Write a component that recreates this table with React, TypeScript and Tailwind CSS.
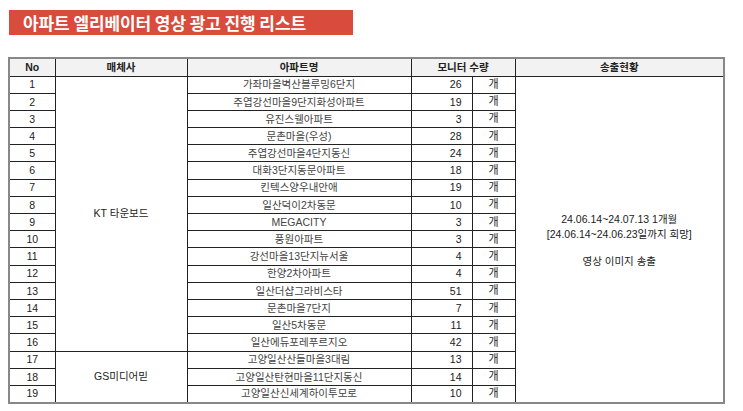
const rows: [string, number][] = [
  ['가좌마을벽산블루밍6단지', 26],
  ['주엽강선마을9단지화성아파트', 19],
  ['유진스웰아파트', 3],
  ['문촌마을(우성)', 28],
  ['주엽강선마을4단지동신', 24],
  ['대화3단지동문아파트', 18],
  ['킨텍스양우내안애', 19],
  ['일산덕이2차동문', 10],
  ['MEGACITY', 3],
  ['풍원아파트', 3],
  ['강선마을13단지뉴서울', 4],
  ['한양2차아파트', 4],
  ['일산더샵그라비스타', 51],
  ['문촌마을7단지', 7],
  ['일산5차동문', 11],
  ['일산에듀포레푸르지오', 42],
  ['고양일산산들마을3대림', 13],
  ['고양일산탄현마을11단지동신', 14],
  ['고양일산신세계하이투모로', 10],
];

const cell = 'border border-[#222] p-0';

export default function App() {
  return (
    <div className="w-[743px] h-[411px] bg-white font-['Liberation_Sans','Noto_Sans_CJK_KR',sans-serif] text-[#222] overflow-hidden">
      <div className="pt-[10px] pl-[9px]">
        <div className="w-[344px] h-[25px] bg-[#d94b3c] flex items-center pl-[14px]">
          <span className="text-white text-[17px] font-bold tracking-[-0.1px] leading-none whitespace-nowrap font-['Noto_Sans_CJK_KR',sans-serif]">
            아파트 엘리베이터 영상 광고 진행 리스트
          </span>
        </div>
      </div>

      <div className="pt-[22px] pl-[8px]">
        <table className="border-collapse table-fixed w-[715px] text-[10.5px] leading-none border-2 border-[#888]">
          <colgroup>
            <col className="w-[46px]" />
            <col className="w-[132px]" />
            <col className="w-[224px]" />
            <col className="w-[61px]" />
            <col className="w-[43px]" />
            <col className="w-[209px]" />
          </colgroup>
          <thead>
            <tr className="h-[18px] bg-[#f2f2f2] font-bold">
              <th className={cell}>No</th>
              <th className={cell}>매체사</th>
              <th className={cell}>아파트명</th>
              <th className={cell} colSpan={2}>모니터 수량</th>
              <th className={cell}>송출현황</th>
            </tr>
          </thead>
          <tbody>
            {rows.map(([name, qty], i) => (
              <tr key={i} className="h-[17.2px]">
                <td className={`${cell} text-center`}>{i + 1}</td>
                {i === 0 && (
                  <td className={`${cell} text-center`} rowSpan={16}>
                    KT 타운보드
                  </td>
                )}
                {i === 16 && (
                  <td className={`${cell} text-center`} rowSpan={3}>
                    GS미디어믿
                  </td>
                )}
                <td className={`${cell} text-center text-[#444]`}>{name}</td>
                <td className={`${cell} text-right pr-[10px]`}>{qty}</td>
                <td className={`${cell} text-center`}>
                  <span className="text-[11px] text-[#222]">개</span>
                </td>
                {i === 0 && (
                  <td className={`${cell} text-center align-middle`} rowSpan={19}>
                    <div className="flex flex-col items-center leading-[15px] pt-[2px]">
                      <span>24.06.14~24.07.13 1개월</span>
                      <span>[24.06.14~24.06.23일까지 희망]</span>
                      <span className="mt-[12px]">영상 이미지 송출</span>
                    </div>
                  </td>
                )}
              </tr>
            ))}
          </tbody>
        </table>
      </div>
    </div>
  );
}
